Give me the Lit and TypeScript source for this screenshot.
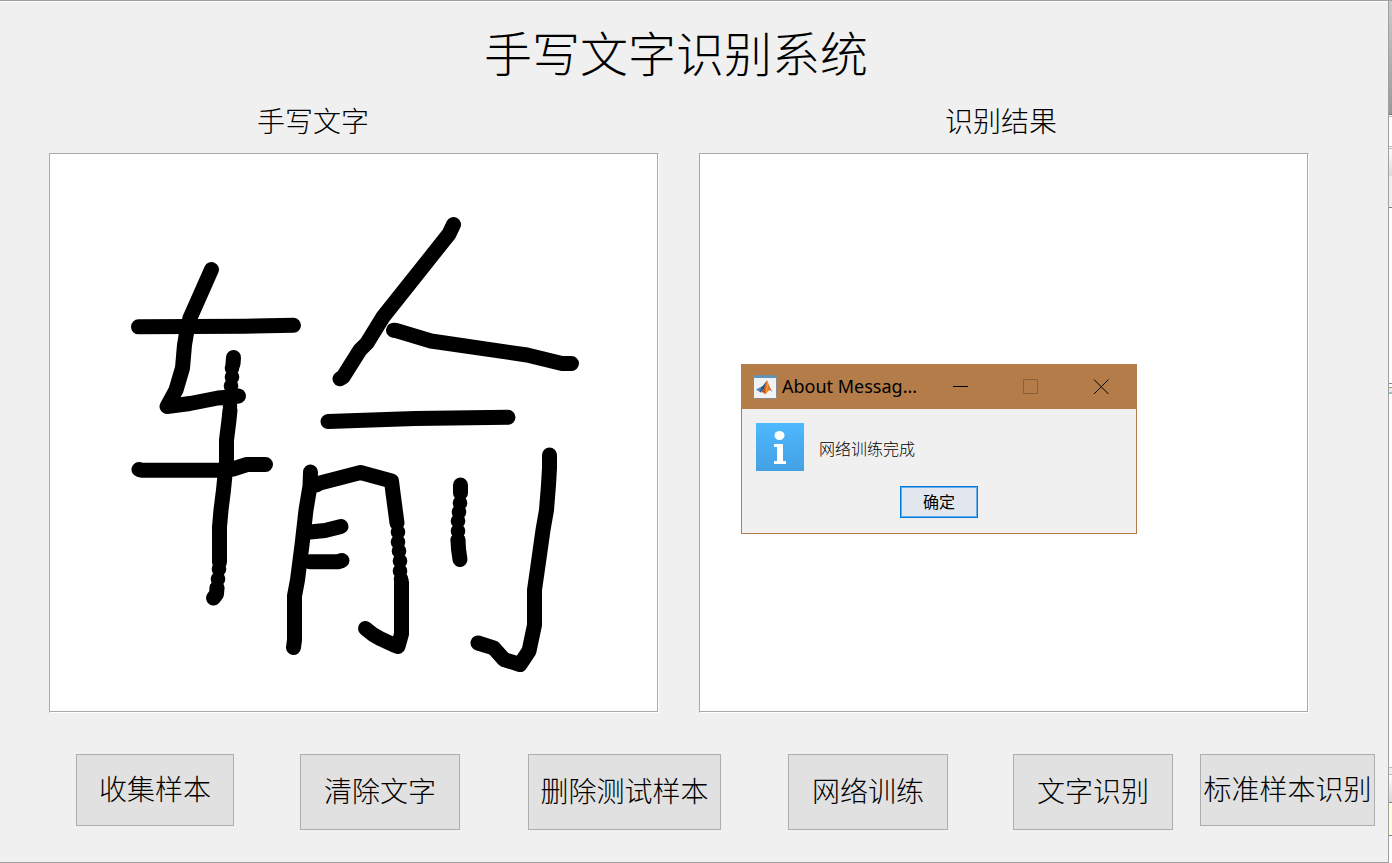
import { LitElement, html, css, svg } from "lit";
import { customElement, state } from "lit/decorators.js";

/* Pen strokes of the sample character, in drawing-pad units. */
const STROKES: string[] = [
  "M211.5 269.5L198 300L190 318L187 330L184.500 345L182.500 368L176 390L167 406.500L190 403.500L218 398L231 397L238.500 396",
  "M138.500 326.800L245 326.300L293.500 325.300",
  "M233.500 357.500L233 364",
  "M230 410L229 420L227.500 432L226.500 440V462L225 475L223.500 490L221 510L219.500 527V562",
  "M217 588L216.500 594L213.500 598",
  "M139 469.500L142 470.300H220L233 469L247 464.500H265.500",
  "M453.500 224.500L449 234L383 317L367 343L360 350L343 377L340 378.700",
  "M393.500 330.200L396 330.500L431 341L527 355L562 363.500H571.500",
  "M328 421.500L415 418.500L508 417.300",
  "M310.500 472L310 486L306 510L302 545L297.500 580L294.500 596V640L293.500 647.500",
  "M316 485L320 483L360.500 472.500L391.500 481L393 493L397 523",
  "M401.500 582V634L398 646.500L394 645L380 638.500L373 634.500L365.500 628.500",
  "M310 532L325 530.500L341 526.500",
  "M310 561.700H338L342 560.500",
  "M460.500 485V493",
  "M458 540L458.500 549L460 559.500",
  "M549.500 455V468L548.500 485L546.500 510L543 530L538.500 562L534.500 590V625L529 651L520 664.500L504 659.500L493.500 647.800L478 643",
];

const DOTS: [number, number][] = [
  [232, 368], [232, 377], [231, 386], [231, 398], [230, 406],
  [219, 569], [218, 579], [217, 588],
  [398, 532], [398, 542], [399, 551], [400, 561], [400, 571], [401, 579],
  [460, 503], [459, 512], [458, 521], [458, 531], [458, 540],
];

const ACTIONS = [
  { label: "收集样本", cls: "a1" },
  { label: "清除文字", cls: "a2" },
  { label: "删除测试样本", cls: "a3" },
  { label: "网络训练", cls: "a4" },
  { label: "文字识别", cls: "a5" },
  { label: "标准样本识别", cls: "a6" },
];

@customElement("message-dialog")
export class MessageDialog extends LitElement {
  static styles = css`
    :host {
      display: block;
      box-sizing: border-box;
      border: 1px solid #b37c49;
      background: #f0f0f0;
      color: #000;
      font-family: "Noto Sans", "Noto Sans CJK SC", sans-serif;
    }
    .bar {
      display: flex;
      align-items: center;
      height: 44px;
      background: #b37c49;
      padding-left: 11px;
    }
    .name {
      flex: 1;
      margin: 0 0 0 5px;
      padding-bottom: 2px;
      font-size: 18px;
      line-height: 24px;
      font-weight: 400;
      white-space: nowrap;
    }
    .win {
      flex: none;
      width: 70px;
      height: 44px;
      padding: 0;
      border: 0;
      background: none;
      color: #000;
    }
    .win:disabled {
      color: #8b6038;
    }
    .win svg {
      display: block;
      margin: auto;
    }
    .body {
      display: flex;
      align-items: center;
      gap: 15px;
      padding: 14px 14px 0;
    }
    .text {
      margin: 0;
      padding-top: 2px;
      font-size: 16px;
      line-height: 24px;
      font-weight: 300;
      font-family: "Noto Sans CJK SC", sans-serif;
    }
    .foot {
      display: flex;
      justify-content: center;
      padding: 15px 0;
    }
    .ok {
      width: 78px;
      height: 32px;
      padding: 0 0 2px;
      border: 1px solid #0078d7;
      box-shadow: inset 0 0 0 1px #66aeea;
      background: #e1e6ef;
      font: 400 16px "Noto Sans CJK SC", sans-serif;
      color: #000;
    }
  `;

  private dismiss() {
    this.dispatchEvent(new CustomEvent("dismiss"));
  }

  render() {
    return html`
      <div class="bar">
        <svg width="24" height="24" viewBox="0 0 24 24" aria-hidden="true">
          <defs>
            <linearGradient id="flame" x1="0" x2="1">
              <stop offset="0" stop-color="#8f2320" />
              <stop offset=".45" stop-color="#e8731f" />
              <stop offset=".6" stop-color="#f08a28" />
              <stop offset="1" stop-color="#a3301c" />
            </linearGradient>
          </defs>
          <rect x=".5" y=".5" width="23" height="23" rx="1" fill="#f1f2f3" stroke="#8b8987" />
          <path d="M1 .5h22v2.500H1z" fill="#5e95bd" />
          <path d="M3 14.500l5-2.500 2.500 2-3.500 3z" fill="#4a84bf" />
          <path d="M8 12c3-1 3.500-4 6-6.500l-2.500 8-4 4-1-.8 2-2.700z" fill="#2c5280" />
          <path d="M8 17.500c3-2 4-8 6-12.500 1.500 3 3 9 5.500 12-1.500-1.500-2.500-2-3.500-1.500-1.500.8-2 2.500-4 4-.8-1.500-2-2.500-4-2z" fill="url(#flame)" />
          <path d="M14 6c.6 3 0 8-2 12 1.800-2 3.500-7 2-12z" fill="#ffc04a" />
        </svg>
        <h2 class="name">About Messag...</h2>
        <button class="win" aria-label="最小化">
          <svg width="16" height="16"><path d="M0 7.500h15" stroke="currentColor" /></svg>
        </button>
        <button class="win" aria-label="最大化" disabled>
          <svg width="16" height="16"><path d="M.5.5h14v14H.5z" fill="none" stroke="currentColor" /></svg>
        </button>
        <button class="win" aria-label="关闭" @click=${this.dismiss}>
          <svg width="16" height="16"><path d="M1 .5l14.500 14.500M15.500.500l-14.500 14.500" stroke="currentColor" /></svg>
        </button>
      </div>
      <div class="body">
        <svg width="48" height="48" viewBox="0 0 48 48" aria-hidden="true">
          <defs>
            <linearGradient id="blue" x1="0" x2="0" y1="0" y2="1">
              <stop offset="0" stop-color="#4eb8ff" />
              <stop offset="1" stop-color="#43a1e3" />
            </linearGradient>
          </defs>
          <path d="M0 0h48v48H0z" fill="url(#blue)" />
          <ellipse cx="23.500" cy="12.500" rx="5" ry="4.500" fill="#fff" />
          <path d="M18 21h9v17h3v3H18v-3h3V24h-3z" fill="#fff" />
        </svg>
        <p class="text">网络训练完成</p>
      </div>
      <div class="foot"><button class="ok" @click=${this.dismiss}>确定</button></div>
    `;
  }
}

@customElement("app-root")
export class AppRoot extends LitElement {
  static styles = css`
    :host {
      display: flex;
      box-sizing: border-box;
      min-height: 100vh;
      color: #000;
      font-family: "Noto Sans CJK SC", sans-serif;
      font-weight: 300;
    }
    .window {
      flex: 1;
      min-width: 0;
      box-sizing: border-box;
      background: #f0f0f0;
      border: 1px solid #a0a0a0;
      border-left: 0;
      box-shadow: inset 0 1px #fff;
    }
    .behind {
      flex: none;
      width: 3px;
      background: linear-gradient(
        #a0a0a0 0 1px, #cbcbcb 1px, #999 114px, #707070 114px 115px, #fff 115px 116px, #b8b8b8 116px 117px,
        #fff 117px 146px, #b8b8b8 146px 147px, #fff 147px 148px, #b8b8b8 148px 149px,
        #fff 149px, #dadada 176px, #f0f0f0 176px 207px, #808080 207px 208px,
        #fff 208px 383px, #5da05d 383px 384px, #fff 384px 387px, #a8a03c 387px 388px, #dff1f5 388px 392px,
        #9cc9a0 392px 394px, #fff 394px 767px, #b8b8b8 767px 768px, #f0f0f0 768px 774px, #b8b8b8 774px 775px,
        #fff 775px, #dadada 802px, #808080 802px 803px, #ffffe1 803px 835px, #808080 835px 836px, #fff 836px
      );
    }
    .title {
      margin: 0;
      padding: 14px 36px 4px 0;
      text-align: center;
      font-size: 48px;
      line-height: 72px;
      font-weight: 300;
    }
    .panels {
      display: grid;
      grid-template-columns: 49fr 610fr 40fr 610fr 79fr;
      grid-template-rows: 62px auto;
    }
    .caption {
      grid-row: 1;
      margin: 0;
      padding-top: 9px;
      text-align: center;
      font-size: 28px;
      line-height: 40px;
      font-weight: 300;
    }
    .left {
      grid-column: 2;
    }
    .right {
      grid-column: 4;
    }
    .caption.left {
      padding-right: 82px;
    }
    .caption.right {
      padding-right: 6px;
    }
    .pad {
      grid-row: 2;
      position: relative;
      box-sizing: border-box;
      aspect-ratio: 610 / 560;
      background: #fff;
      border: 1px solid;
      border-color: #a9a9a9 #fff #fff #a9a9a9;
      box-shadow: inset -1px -1px #a9a9a9;
    }
    .pad > svg {
      display: block;
      width: 100%;
      height: 100%;
    }
    .dialog {
      position: absolute;
      left: 41px;
      top: 210px;
      width: 396px;
    }
    .actions {
      display: grid;
      grid-template-columns: 76fr 158fr 66fr 160fr 68fr 193fr 67fr 160fr 65fr 160fr 27fr 175fr 13fr;
      align-items: start;
      padding: 41px 0 31px;
    }
    .action {
      box-sizing: border-box;
      height: 76px;
      padding: 0 0 4px;
      border: 1px solid #adadad;
      background: #e1e1e1;
      color: #000;
      font: 300 28px "Noto Sans CJK SC", sans-serif;
      white-space: nowrap;
    }
    .a1 {
      grid-column: 2;
      height: 72px;
    }
    .a2 {
      grid-column: 4;
    }
    .a3 {
      grid-column: 6;
    }
    .a4 {
      grid-column: 8;
    }
    .a5 {
      grid-column: 10;
    }
    .a6 {
      grid-column: 12;
      height: 72px;
    }
  `;

  @state() private open = true;

  render() {
    return html`
      <main class="window">
        <h1 class="title">手写文字识别系统</h1>
        <section class="panels">
          <h2 class="caption left">手写文字</h2>
          <h2 class="caption right">识别结果</h2>
          <div class="pad left">
            <svg viewBox="50 154 608 558" role="img" aria-label="输">
              <g fill="none" stroke="#000" stroke-width="15" stroke-linecap="round" stroke-linejoin="round">
                ${STROKES.map((d) => svg`<path d=${d} />`)}
              </g>
              ${DOTS.map(([x, y]) => svg`<circle cx=${x} cy=${y} r="7.300" />`)}
            </svg>
          </div>
          <div class="pad right">
            ${this.open
              ? html`<message-dialog class="dialog" role="dialog" @dismiss=${() => (this.open = false)}></message-dialog>`
              : null}
          </div>
        </section>
        <nav class="actions">
          ${ACTIONS.map((a) => html`<button class="action ${a.cls}">${a.label}</button>`)}
        </nav>
      </main>
      <div class="behind"></div>
    `;
  }
}
